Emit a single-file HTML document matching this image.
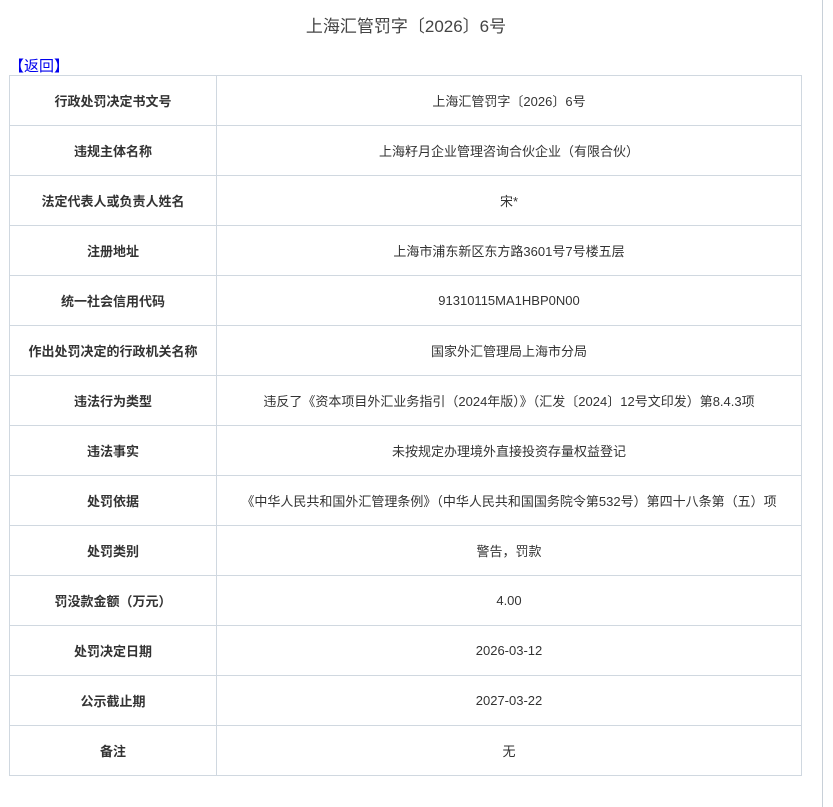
<!DOCTYPE html>
<html><head><meta charset="utf-8"><style>
body{margin:0;background:#fff;width:833px;height:807px;overflow:hidden;position:relative;font-family:"Liberation Sans","Noto Sans CJK SC",sans-serif;}
.title{position:absolute;top:12px;left:0;width:812px;text-align:center;font-size:17px;color:#444;}
.back{position:absolute;top:55px;left:9px;font-size:15px;color:#0000ee;}
.vline{position:absolute;left:822px;top:0;width:1px;height:807px;background:#c8d0d8;}
table{position:absolute;left:9px;top:75px;border-collapse:collapse;width:793px;}
td{border:1px solid #d0d8e0;height:49px;text-align:center;font-size:13px;color:#333;padding:0;}
td.k{width:206px;font-weight:bold;color:#333;}
</style></head><body>
<div class="title">上海汇管罚字〔2026〕6号</div>
<div class="back">【返回】</div>
<div class="vline"></div>
<table>
<tr><td class="k">行政处罚决定书文号</td><td>上海汇管罚字〔2026〕6号</td></tr>
<tr><td class="k">违规主体名称</td><td>上海籽月企业管理咨询合伙企业（有限合伙）</td></tr>
<tr><td class="k">法定代表人或负责人姓名</td><td>宋*</td></tr>
<tr><td class="k">注册地址</td><td>上海市浦东新区东方路3601号7号楼五层</td></tr>
<tr><td class="k">统一社会信用代码</td><td>91310115MA1HBP0N00</td></tr>
<tr><td class="k">作出处罚决定的行政机关名称</td><td>国家外汇管理局上海市分局</td></tr>
<tr><td class="k">违法行为类型</td><td>违反了《资本项目外汇业务指引（2024年版）》（汇发〔2024〕12号文印发）第8.4.3项</td></tr>
<tr><td class="k">违法事实</td><td>未按规定办理境外直接投资存量权益登记</td></tr>
<tr><td class="k">处罚依据</td><td>《中华人民共和国外汇管理条例》（中华人民共和国国务院令第532号）第四十八条第（五）项</td></tr>
<tr><td class="k">处罚类别</td><td>警告，罚款</td></tr>
<tr><td class="k">罚没款金额（万元）</td><td>4.00</td></tr>
<tr><td class="k">处罚决定日期</td><td>2026-03-12</td></tr>
<tr><td class="k">公示截止期</td><td>2027-03-22</td></tr>
<tr><td class="k">备注</td><td>无</td></tr>
</table>
</body></html>
